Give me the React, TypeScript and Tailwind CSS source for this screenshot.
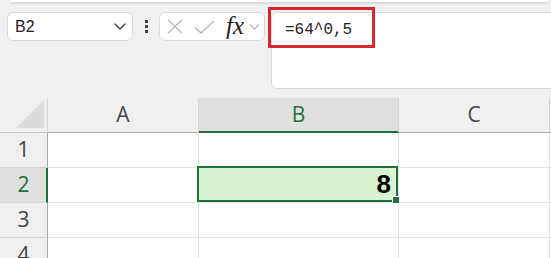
import React from "react";

function Chevron({ className }: { className?: string }) {
  return (
    <svg className={className} viewBox="0 0 12 7" fill="none">
      <path d="M1 1l5 5 5-5" stroke="currentColor" strokeWidth="1.3" strokeLinecap="round" strokeLinejoin="round" />
    </svg>
  );
}

export default function App() {
  const cols = [
    { name: "A", w: "w-[151px]" },
    { name: "B", w: "w-[200px]" },
    { name: "C", w: "w-[151px]" },
  ];
  const rows = [1, 2, 3, 4];
  return (
    <div
      className="w-[551px] h-[258px] bg-[#f0f0f0] overflow-hidden relative"
      style={{ fontFamily: '"Open Sans", "Liberation Sans", sans-serif' }}
    >
      {/* top ribbon edge */}
      <div className="ml-[10px] mr-[3px] h-[2px] bg-white rounded-b-[6px] shadow-[0_1px_3px_rgba(0,0,0,0.2)]" />

      {/* formula bar row */}
      <div className="flex items-start mt-[10px] h-[77px]">
        <div className="shrink-0 ml-[7px] w-[126px] h-[29px] bg-white border border-[#d9d9d9] rounded-[6px] flex items-center pl-[7px] pr-[6px]">
          <span className="text-[16px] text-[#222] leading-none flex-1" style={{ fontFamily: '"Liberation Sans", sans-serif' }}>B2</span>
          <Chevron className="w-[12px] h-[7px] text-[#333]" />
        </div>
        <div className="shrink-0 w-[26px] h-[29px] flex flex-col items-center justify-center gap-[2px]">
          <div className="w-[3px] h-[3px] bg-[#444]" />
          <div className="w-[3px] h-[3px] bg-[#444]" />
          <div className="w-[3px] h-[3px] bg-[#444]" />
        </div>
        <div className="shrink-0 w-[106px] h-[29px] bg-white border border-[#dcdcdc] rounded-[6px] flex items-center pl-[7px]">
          <svg className="shrink-0 w-[16px] h-[15px]" viewBox="0 0 16 15" fill="none">
            <path d="M1 1l14 13M15 1L1 14" stroke="#b8b8b8" strokeWidth="1.3" />
          </svg>
          <svg className="shrink-0 w-[21px] h-[14px] ml-[11px]" viewBox="0 0 21 14" fill="none">
            <path d="M1 7.5l6 5.5L20 1" stroke="#b8b8b8" strokeWidth="1.3" />
          </svg>
          <span
            className="ml-[11px] text-[25px] italic text-[#222] leading-none -mt-[3px]"
            style={{ fontFamily: '"Liberation Serif", "DejaVu Serif", serif' }}
          >
            fx
          </span>
          <Chevron className="shrink-0 ml-[5px] w-[11px] h-[6px] text-[#aaa]" />
        </div>
        <div className="shrink-0 ml-[6px] w-[290px] h-[77px] bg-white border border-[#d9d9d9] rounded-[6px] pl-[13px] pt-[9px]">
          <span className="block text-[16px] text-[#222] leading-[16px]" style={{ fontFamily: '"Liberation Mono", monospace' }}>
            =64^0,5
          </span>
        </div>
      </div>

      {/* red highlight */}
      <div className="absolute left-[268px] top-[7px] w-[107px] h-[41px] border-[3px] border-[#d7262e]" />

      {/* grid */}
      <div className="mt-[9px]">
        {/* header row */}
        <div className="flex h-[35px]">
          <div className="shrink-0 w-[48px] h-[35px] border-r border-[#d4d4d4] border-b border-b-[#c8c8c8] flex items-end justify-end pr-[3px] pb-[4px]">
            <svg width="28" height="28" viewBox="0 0 28 28">
              <path d="M28 0V28H0Z" fill="#dcdcdc" />
            </svg>
          </div>
          {cols.map((c) =>
            c.name === "B" ? (
              <div
                key={c.name}
                className={`shrink-0 ${c.w} h-[35px] bg-[#e0e0e0] border-b-2 border-[#1e6f42] border-r border-r-[#d4d4d4] flex items-center justify-center text-[21px] text-[#1e6f42]`}
              >
                B
              </div>
            ) : (
              <div
                key={c.name}
                className={`shrink-0 ${c.w} h-[35px] border-b border-b-[#a8a8a8] border-r border-r-[#d4d4d4] flex items-center justify-center text-[21px] text-[#444] pb-[1px]`}
              >
                {c.name}
              </div>
            )
          )}
          <div className="flex-1 h-[35px] border-b border-b-[#a8a8a8]" />
        </div>
        {rows.map((r) => (
          <div key={r} className="flex h-[35px]">
            <div
              className={
                r === 2
                  ? "shrink-0 w-[48px] h-[35px] bg-[#e0e0e0] border-r-2 border-[#1e6f42] border-b border-b-[#d4d4d4] flex items-center justify-center text-[21px] text-[#1e6f42] pl-[1px]"
                  : "shrink-0 w-[48px] h-[35px] border-r border-[#a8a8a8] border-b border-b-[#d4d4d4] flex items-center justify-center text-[21px] text-[#444]"
              }
            >
              {r}
            </div>
            {cols.map((c) => {
              const sel = r === 2 && c.name === "B";
              return (
                <div
                  key={c.name}
                  className={`shrink-0 ${c.w} h-[35px] bg-white border-r border-b border-[#e1e1e1] relative`}
                >
                  {sel && (
                    <div className="absolute left-[-2px] top-[-2px] w-[201px] h-[36px] bg-[#d9f2d0] border-2 border-[#1e6f42] flex items-center justify-end pr-[5px] z-10">
                      <span
                        className="text-[26px] font-bold text-black leading-none"
                        style={{ fontFamily: '"Liberation Sans", sans-serif' }}
                      >
                        8
                      </span>
                      <div className="absolute right-[-4px] bottom-[-4px] w-[6px] h-[6px] bg-[#1e6f42] border border-white box-content" />
                    </div>
                  )}
                </div>
              );
            })}
            <div className="flex-1 h-[35px] bg-white border-b border-[#e1e1e1]" />
          </div>
        ))}
      </div>
    </div>
  );
}
